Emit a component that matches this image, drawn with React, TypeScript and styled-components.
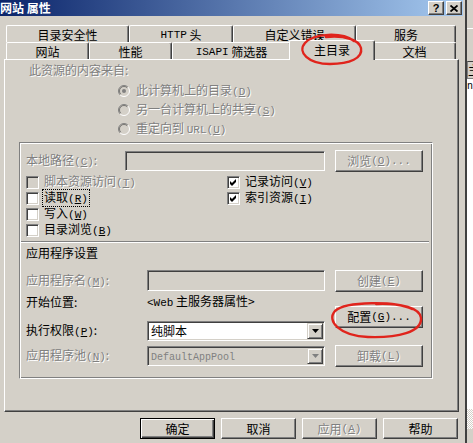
import React from 'react';
import styled, { createGlobalStyle, css } from 'styled-components';

const FACE = '#D4D0C8';
const SHADOW = '#808080';
const DARK = '#404040';
const HILITE = '#FFFFFF';

const GlobalStyle = createGlobalStyle`
  html, body { margin: 0; padding: 0; background: ${FACE}; }
  body { font-family: "Noto Sans CJK SC", "Noto Sans", sans-serif; font-size: 12px; color: #000; }
  #root { width: 473px; height: 443px; overflow: hidden; }
  *, *::before, *::after { box-sizing: border-box; }
`;

const disabledText = css`
  color: ${SHADOW};
  text-shadow: 1px 1px 0 ${HILITE};
`;

const Screen = styled.div`
  position: relative;
  display: flex;
  width: 473px;
  height: 443px;
  overflow: hidden;
  background: ${FACE};
`;

const Window = styled.div`
  flex: none;
  width: 467px;
  height: 443px;
  display: flex;
  flex-direction: column;
  border-right: 2px solid ${DARK};
`;

const TitleBar = styled.div`
  flex: none;
  height: 16px;
  margin-right: 2px;
  display: flex;
  align-items: flex-start;
  background: linear-gradient(to right, #0a246a 0%, #a6caf0 100%);
`;

const TitleText = styled.div`
  flex: 1;
  color: #fff;
  font-weight: bold;
  font-size: 12px;
  line-height: 16px;
  white-space: pre;
`;

const CaptionButtons = styled.div`
  display: flex;
  gap: 2px;
  margin: 1px 1px 0 0;
`;

const CaptionButton = styled.div`
  width: 16px;
  height: 14px;
  background: ${FACE};
  border: 1px solid;
  border-color: ${HILITE} ${DARK} ${DARK} ${HILITE};
  box-shadow: inset -1px -1px 0 ${SHADOW};
  display: flex;
  align-items: center;
  justify-content: center;
  font-family: "Liberation Sans", Arial, sans-serif;
  font-weight: bold;
  font-size: 11px;
  line-height: 12px;
  color: #000;
`;

const TabArea = styled.div`
  flex: none;
  margin: 9px 0 0 6px;
  width: 450px;
  display: flex;
  flex-direction: column;
`;

const TabRow = styled.div`
  display: flex;
  height: 17px;
`;

const Tab = styled.div<{ $w: number; $active?: boolean }>`
  flex: none;
  width: ${(p) => p.$w}px;
  height: 17px;
  background: ${FACE};
  border-top: 1px solid ${HILITE};
  border-left: 1px solid ${HILITE};
  border-right: 1px solid ${DARK};
  border-radius: 2px 2px 0 0;
  box-shadow: inset -1px 0 0 ${SHADOW};
  display: flex;
  align-items: center;
  justify-content: center;
  padding-top: 1px;
  line-height: 14px;
  white-space: pre;
  ${(p) =>
    p.$active &&
    css`
      position: relative;
      z-index: 2;
      width: ${p.$w + 4}px;
      height: 20px;
      margin: -2px -2px 0;
      padding-top: 0;
      padding-bottom: 2px;
    `}
`;

const Panel = styled.div`
  flex: none;
  margin-left: 4px;
  width: 455px;
  height: 353px;
  border-top: 1px solid ${HILITE};
  border-left: 1px solid ${HILITE};
  border-right: 1px solid ${DARK};
  border-bottom: 1px solid ${DARK};
  box-shadow: inset -1px -1px 0 ${SHADOW};
  display: flex;
  flex-direction: column;
  padding-top: 2px;
`;

const Txt = styled.span<{ $dis?: boolean }>`
  white-space: pre;
  line-height: 16px;
  ${(p) => p.$dis && disabledText}
`;

const L = styled.span<{ $s?: number }>`
  font-family: "Liberation Mono", "DejaVu Sans Mono", monospace;
  font-size: ${(p) => p.$s ?? 11}px;
`;

const Heading = styled.div`
  height: 16px;
  margin-left: 24px;
  display: flex;
  align-items: center;
`;

const RadioList = styled.div`
  margin: 3px 0 0 113px;
  display: flex;
  flex-direction: column;
`;

const RadioRow = styled.div`
  height: 19px;
  display: flex;
  align-items: center;
  gap: 6px;
`;

const GroupBox = styled.div`
  flex: none;
  margin: 4px 0 0 14px;
  width: 414px;
  height: 237px;
  border: 1px solid;
  border-color: ${SHADOW} ${HILITE} ${HILITE} ${SHADOW};
  box-shadow: inset 1px 1px 0 ${HILITE}, inset -1px -1px 0 ${SHADOW};
  padding: 7px 0 0 6px;
  display: flex;
  flex-direction: column;
`;

const FormRow = styled.div<{ $h: number; $mt?: number }>`
  display: flex;
  align-items: center;
  height: ${(p) => p.$h}px;
  margin-top: ${(p) => p.$mt ?? 0}px;
`;

const Label = styled.span<{ $w: number; $dis?: boolean }>`
  flex: none;
  width: ${(p) => p.$w}px;
  white-space: pre;
  line-height: 16px;
  ${(p) => p.$dis && disabledText}
`;

const Field = styled.div<{ $w: number; $h: number; $dis?: boolean }>`
  flex: none;
  width: ${(p) => p.$w}px;
  height: ${(p) => p.$h}px;
  background: ${(p) => (p.$dis ? FACE : '#fff')};
  border: 1px solid;
  border-color: ${SHADOW} ${HILITE} ${HILITE} ${SHADOW};
  box-shadow: inset 1px 1px 0 ${DARK}, inset -1px -1px 0 ${FACE};
  padding: 1px;
  display: flex;
  align-items: center;
`;

const FieldText = styled.span<{ $dis?: boolean }>`
  flex: 1;
  padding-left: 2px;
  white-space: pre;
  line-height: 16px;
  color: ${(p) => (p.$dis ? SHADOW : '#000')};
`;

const DropButton = styled.span`
  flex: none;
  width: 16px;
  height: 16px;
  background: ${FACE};
  border: 1px solid;
  border-color: ${FACE} ${DARK} ${DARK} ${FACE};
  box-shadow: inset 1px 1px 0 ${HILITE}, inset -1px -1px 0 ${SHADOW};
  display: flex;
  align-items: center;
  justify-content: center;
`;

const Button = styled.div<{ $w: number; $h: number; $dis?: boolean; $def?: boolean; $ml?: number; $mt?: number }>`
  flex: none;
  width: ${(p) => p.$w}px;
  height: ${(p) => p.$h}px;
  margin-left: ${(p) => p.$ml ?? 0}px;
  margin-top: ${(p) => p.$mt ?? 0}px;
  background: ${FACE};
  border: 1px solid;
  border-color: ${HILITE} ${DARK} ${DARK} ${HILITE};
  box-shadow: inset -1px -1px 0 ${SHADOW};
  display: flex;
  align-items: center;
  justify-content: center;
  white-space: pre;
  line-height: 16px;
  ${(p) => p.$dis && disabledText}
  ${(p) =>
    p.$def &&
    css`
      border-color: #000;
      box-shadow: inset 1px 1px 0 ${HILITE}, inset -1px -1px 0 ${DARK}, inset -2px -2px 0 ${SHADOW};
    `}
`;

const CheckGrid = styled.div`
  margin-top: 2px;
  display: grid;
  grid-template-columns: 201px auto;
  grid-template-rows: repeat(4, 16px);
  grid-auto-flow: column;
`;

const CheckItem = styled.div`
  display: flex;
  align-items: center;
  gap: 5px;
`;

const CheckBox = styled.span<{ $dis?: boolean }>`
  flex: none;
  width: 13px;
  height: 13px;
  background: ${(p) => (p.$dis ? FACE : '#fff')};
  border: 1px solid;
  border-color: ${SHADOW} ${HILITE} ${HILITE} ${SHADOW};
  box-shadow: inset 1px 1px 0 ${DARK}, inset -1px -1px 0 ${FACE};
  display: flex;
  align-items: center;
  justify-content: center;
`;

const CheckLabel = styled.span<{ $dis?: boolean; $focus?: boolean }>`
  white-space: pre;
  line-height: 14px;
  padding: 0 1px;
  margin-left: -1px;
  ${(p) => p.$dis && disabledText}
  ${(p) => p.$focus && css`outline: 1px dotted #000;`}
`;

const Separator = styled.div`
  height: 2px;
  margin: 3px 3px 0 -5px;
  border-top: 1px solid ${SHADOW};
  border-bottom: 1px solid ${HILITE};
`;

const SubHeading = styled.div`
  height: 16px;
  margin-top: 1px;
  display: flex;
  align-items: center;
  white-space: pre;
`;

const AppArea = styled.div`
  display: flex;
  margin-top: 10px;
`;

const AppFields = styled.div`
  flex: none;
  width: 299px;
  display: flex;
  flex-direction: column;
`;

const AppButtons = styled.div`
  flex: none;
  margin-left: 10px;
  display: flex;
  flex-direction: column;
`;

const Footer = styled.div`
  display: flex;
  justify-content: flex-end;
  gap: 6px;
  margin-top: 6px;
  padding-right: 7px;
`;

const SideStrip = styled.div`
  flex: none;
  width: 6px;
  height: 443px;
  display: flex;
  flex-direction: column;
  overflow: hidden;
`;

const SideBlock = styled.div<{ $h: number; $bg?: string }>`
  flex: none;
  height: ${(p) => p.$h}px;
  background: ${(p) => p.$bg ?? FACE};
`;

const SideHeader = styled.div`
  flex: none;
  height: 18px;
  border-top: 1px solid ${DARK};
  border-bottom: 1px solid ${SHADOW};
  border-left: 1px solid ${SHADOW};
  background: ${FACE};
  font-size: 12px;
  line-height: 15px;
  white-space: pre;
  overflow: hidden;
`;

const SideList = styled.div`
  flex: none;
  height: 330px;
  background: #fff;
  padding-top: 3px;
  font-family: "Liberation Mono", monospace;
  font-size: 10px;
  line-height: 10px;
  white-space: pre;
  overflow: hidden;
`;

const SideChecker = styled.div`
  flex: none;
  height: 20px;
  background: repeating-conic-gradient(#ffffff 0 25%, ${FACE} 0 50%) 0 0 / 2px 2px;
`;

const Annotations = styled.svg`
  position: absolute;
  left: 0;
  top: 0;
  width: 473px;
  height: 443px;
  pointer-events: none;
  z-index: 10;
`;

const Mn = ({ k }: { k: string }) => (
  <L>
    (<u>{k}</u>)
  </L>
);

const RadioIcon = ({ checked }: { checked?: boolean }) => (
  <svg width="12" height="12" viewBox="0 0 12 12" style={{ flex: 'none' }}>
    <circle cx="6" cy="6" r="5" fill={FACE} />
    <path d="M 9.9 2.1 A 5.5 5.5 0 0 0 2.1 9.9" stroke={SHADOW} strokeWidth="1" fill="none" />
    <path d="M 2.1 9.9 A 5.5 5.5 0 0 0 9.9 2.1" stroke={HILITE} strokeWidth="1" fill="none" />
    <path d="M 9.2 2.8 A 4.5 4.5 0 0 0 2.8 9.2" stroke={DARK} strokeWidth="1" fill="none" opacity="0.6" />
    {checked && <circle cx="6" cy="6" r="2" fill={SHADOW} />}
  </svg>
);

const CheckMark = () => (
  <svg width="7" height="7" viewBox="0 0 7 7">
    <polygon points="0,2 2,4 6,0 6,3 2,7 0,5" fill="#000" />
  </svg>
);

const DownArrow = ({ dis }: { dis?: boolean }) => (
  <svg width="7" height="4" viewBox="0 0 7 4">
    <polygon points="0,0 7,0 3.5,4" fill={dis ? SHADOW : '#000'} />
  </svg>
);

const CloseGlyph = () => (
  <svg width="8" height="7" viewBox="0 0 8 7">
    <path d="M0.5 0.5 L7.5 6.5 M7.5 0.5 L0.5 6.5" stroke="#000" strokeWidth="1.8" />
  </svg>
);

type Chk = { label: React.ReactNode; checked?: boolean; dis?: boolean; focus?: boolean };

const checks: (Chk | null)[] = [
  { label: <>脚本资源访问<Mn k="T" /></>, dis: true },
  { label: <>读取<Mn k="R" /></>, focus: true },
  { label: <>写入<Mn k="W" /></> },
  { label: <>目录浏览<Mn k="B" /></> },
  { label: <>记录访问<Mn k="V" /></>, checked: true },
  { label: <>索引资源<Mn k="I" /></>, checked: true },
];

export default function App() {
  return (
    <Screen>
      <GlobalStyle />
      <Window>
        <TitleBar>
          <TitleText>网站 属性</TitleText>
          <CaptionButtons>
            <CaptionButton>?</CaptionButton>
            <CaptionButton>
              <CloseGlyph />
            </CaptionButton>
          </CaptionButtons>
        </TitleBar>

        <TabArea>
          <TabRow>
            <Tab $w={123}>目录安全性</Tab>
            <Tab $w={104}>
              <L>HTTP</L> 头
            </Tab>
            <Tab $w={123}>自定义错误</Tab>
            <Tab $w={100}>服务</Tab>
          </TabRow>
          <TabRow>
            <Tab $w={83}>网站</Tab>
            <Tab $w={83}>性能</Tab>
            <Tab $w={119}>
              <L>ISAPI</L> 筛选器
            </Tab>
            <Tab $w={82} $active>
              主目录
            </Tab>
            <Tab $w={83}>文档</Tab>
          </TabRow>
        </TabArea>

        <Panel>
          <Heading>
            <Txt $dis>此资源的内容来自:</Txt>
          </Heading>
          <RadioList>
            <RadioRow>
              <RadioIcon checked />
              <Txt $dis>
                此计算机上的目录<Mn k="D" />
              </Txt>
            </RadioRow>
            <RadioRow>
              <RadioIcon />
              <Txt $dis>
                另一台计算机上的共享<Mn k="S" />
              </Txt>
            </RadioRow>
            <RadioRow>
              <RadioIcon />
              <Txt $dis>
                重定向到 <L>URL</L>
                <Mn k="U" />
              </Txt>
            </RadioRow>
          </RadioList>

          <GroupBox>
            <FormRow $h={22}>
              <Label $w={99} $dis>
                本地路径<Mn k="C" />:
              </Label>
              <Field $w={200} $h={20} $dis />
              <Button $w={88} $h={22} $ml={10} $dis>
                浏览<Mn k="O" />
                <L>...</L>
              </Button>
            </FormRow>

            <CheckGrid>
              {checks.map((c, i) =>
                c ? (
                  <CheckItem key={i}>
                    <CheckBox $dis={c.dis}>{c.checked && <CheckMark />}</CheckBox>
                    <CheckLabel $dis={c.dis} $focus={c.focus}>
                      {c.label}
                    </CheckLabel>
                  </CheckItem>
                ) : null
              )}
            </CheckGrid>

            <Separator />
            <SubHeading>应用程序设置</SubHeading>

            <AppArea>
              <AppFields>
                <FormRow $h={21}>
                  <Label $w={121} $dis>
                    应用程序名<Mn k="M" />:
                  </Label>
                  <Field $w={178} $h={21} $dis />
                </FormRow>
                <FormRow $h={16} $mt={3}>
                  <Label $w={121}>开始位置:</Label>
                  <Txt>
                    <L>&lt;Web</L> 主服务器属性&gt;
                  </Txt>
                </FormRow>
                <FormRow $h={20} $mt={11}>
                  <Label $w={121}>
                    执行权限<Mn k="P" />:
                  </Label>
                  <Field $w={178} $h={20}>
                    <FieldText>纯脚本</FieldText>
                    <DropButton>
                      <DownArrow />
                    </DropButton>
                  </Field>
                </FormRow>
                <FormRow $h={20} $mt={5}>
                  <Label $w={121} $dis>
                    应用程序池<Mn k="N" />:
                  </Label>
                  <Field $w={178} $h={20} $dis>
                    <FieldText $dis>
                      <L $s={10}>DefaultAppPool</L>
                    </FieldText>
                    <DropButton>
                      <DownArrow dis />
                    </DropButton>
                  </Field>
                </FormRow>
              </AppFields>
              <AppButtons>
                <Button $w={88} $h={22} $dis>
                  创建<Mn k="E" />
                </Button>
                <Button $w={88} $h={22} $mt={14}>
                  配置<Mn k="G" />
                  <L>...</L>
                </Button>
                <Button $w={88} $h={22} $mt={17} $dis>
                  卸载<Mn k="L" />
                </Button>
              </AppButtons>
            </AppArea>
          </GroupBox>
        </Panel>

        <Footer>
          <Button $w={75} $h={21} $def>
            确定
          </Button>
          <Button $w={75} $h={21}>
            取消
          </Button>
          <Button $w={75} $h={21} $dis>
            应用<Mn k="A" />
          </Button>
          <Button $w={75} $h={21}>
            帮助
          </Button>
        </Footer>
      </Window>

      <SideStrip>
        <SideBlock $h={28} />
        <SideBlock $h={1} $bg="#ffffff" />
        <SideBlock $h={32} />
        <SideHeader>主</SideHeader>
        <SideList>na</SideList>
        <SideChecker />
        <SideBlock $h={20} />
      </SideStrip>

      <Annotations viewBox="0 0 473 443">
        <path
          d="M 354 41 C 342 32, 314 33, 305 43 C 297 52, 308 64, 330 64 C 350 64, 363 58, 361 48 C 359 40, 345 35, 326 37"
          stroke="#e0241c"
          strokeWidth="2.4"
          fill="none"
          strokeLinecap="round"
        />
        <path
          d="M 412 309 C 396 301, 346 301, 335 311 C 326 321, 340 336, 368 337 C 398 338, 422 332, 421 318 C 420 308, 402 303, 376 304"
          stroke="#e0241c"
          strokeWidth="2.4"
          fill="none"
          strokeLinecap="round"
        />
      </Annotations>
    </Screen>
  );
}
